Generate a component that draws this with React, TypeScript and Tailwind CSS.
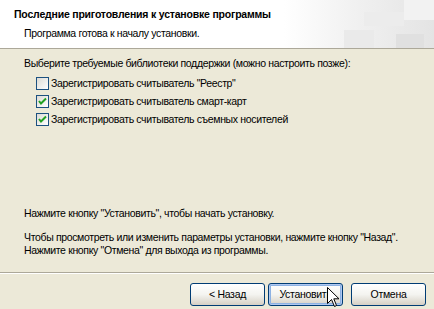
import React from "react";

function CheckBox({ checked }: { checked: boolean }) {
  return (
    <div className="w-[13px] h-[13px] border border-[#1c5180] bg-gradient-to-br from-[#dcdbd5] to-white flex items-center justify-center shrink-0">
      {checked && (
        <svg width="11" height="11" viewBox="0 0 11 11">
          <path d="M2 5 L4 7.5 L9 2.5" stroke="#21a121" strokeWidth="2" fill="none" />
        </svg>
      )}
    </div>
  );
}

function XPButton({ label, active }: { label: string; active?: boolean }) {
  return (
    <div
      className={
        "w-[75px] h-[23px] rounded-[3px] border border-[#003c74] flex items-center justify-center bg-gradient-to-b from-white via-[#f4f4f0] to-[#d6d0c5] text-[10.5px] tracking-[-0.3px] text-black " +
        (active ? "shadow-[inset_0_0_0_1px_#b0c8f0,inset_0_0_0_2px_#8db2e3]" : "")
      }
    >
      {label}
    </div>
  );
}

export default function App() {
  return (
    <div
      className="w-[434px] h-[309px] bg-[#ece9d8] flex flex-col relative overflow-hidden text-black"
      style={{ fontFamily: "'Liberation Sans', Arial, sans-serif" }}
    >
      <div className="h-[49px] bg-white border-b border-[#aca899] relative flex flex-col pl-[14px] pt-[7px]">
        <div className="absolute right-0 top-0 h-full w-[150px] bg-gradient-to-r from-white via-[#f0f0f0] to-[#e4e4e4]">
          <div className="absolute right-[30px] top-[12px] w-[40px] h-[14px] bg-[#ececec]" />
          <div className="absolute right-[0px] top-[0px] w-[30px] h-[20px] bg-[#f2f2f2]" />
          <div className="absolute right-[60px] top-[30px] w-[30px] h-[18px] bg-[#eaeaea]" />
          <div className="absolute right-[10px] top-[34px] w-[28px] h-[14px] bg-[#e0e0e0]" />
        </div>
        <div className="relative text-[10.5px] font-bold leading-[14px] tracking-[-0.2px]">
          Последние приготовления к установке программы
        </div>
        <div className="relative text-[10.5px] leading-[14px] mt-[5px] pl-[10px] tracking-[-0.35px]">
          Программа готова к началу установки.
        </div>
      </div>

      <div className="flex-1 flex flex-col pl-[24px] pt-[8px] text-[10.5px] leading-[13px] tracking-[-0.35px]">
        <div>Выберите требуемые библиотеки поддержки (можно настроить позже):</div>
        <div className="flex flex-col gap-[5px] mt-[7px] pl-[12px]">
          <div className="flex items-center gap-[2px]">
            <CheckBox checked={false} />
            <span>Зарегистрировать считыватель "Реестр"</span>
          </div>
          <div className="flex items-center gap-[2px]">
            <CheckBox checked={true} />
            <span>Зарегистрировать считыватель смарт-карт</span>
          </div>
          <div className="flex items-center gap-[2px]">
            <CheckBox checked={true} />
            <span>Зарегистрировать считыватель съемных носителей</span>
          </div>
        </div>
        <div className="mt-auto mb-[15px] flex flex-col">
          <div>Нажмите кнопку "Установить", чтобы начать установку.</div>
          <div className="mt-[11px]">
            Чтобы просмотреть или изменить параметры установки, нажмите кнопку "Назад".
          </div>
          <div>Нажмите кнопку "Отмена" для выхода из программы.</div>
        </div>
      </div>

      <div className="border-t border-[#aca899] h-[37px] shadow-[inset_0_1px_0_#ffffff] flex items-start justify-end pt-[10px] pr-[8px]">
        <div className="flex">
          <XPButton label="< Назад" />
          <div className="ml-[3px]">
            <XPButton label="Установить" active />
          </div>
          <div className="ml-[8px]">
            <XPButton label="Отмена" />
          </div>
        </div>
      </div>

      <svg className="absolute left-[327px] top-[287px]" width="13" height="21" viewBox="0 0 13 21">
        <path
          d="M0.5 0.5 L0.5 16.5 L4.5 12.5 L7.5 19.5 L9.5 18.5 L6.8 11.8 L12 11.8 Z"
          fill="white"
          stroke="black"
          strokeWidth="1"
          strokeLinejoin="miter"
        />
      </svg>
    </div>
  );
}
